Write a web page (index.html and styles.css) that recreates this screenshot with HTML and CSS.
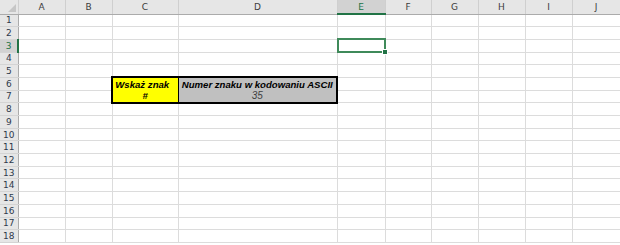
FILE: index.html
```html
<!DOCTYPE html>
<html lang="pl">
<head>
    <meta charset="UTF-8">
    <title>Arkusz - kod ASCII</title>
    <link rel="stylesheet" href="styles.css">
</head>
<body>

    <table class="sheet">
        <colgroup>
            <col class="c-head">
            <col class="c-a"><col class="c-b"><col class="c-c"><col class="c-d"><col class="c-e">
            <col class="c-f"><col class="c-g"><col class="c-h"><col class="c-i"><col class="c-j">
        </colgroup>
        <thead>
            <tr class="col-heads">
                <th class="corner"><span class="corner-mark"></span></th>
                <th>A</th><th>B</th><th>C</th><th>D</th><th class="active">E</th>
                <th>F</th><th>G</th><th>H</th><th>I</th><th>J</th>
            </tr>
        </thead>
        <tbody>
            <tr><th>1</th><td></td><td></td><td></td><td></td><td></td><td></td><td></td><td></td><td></td><td></td></tr>
            <tr><th>2</th><td></td><td></td><td></td><td></td><td></td><td></td><td></td><td></td><td></td><td></td></tr>
            <tr><th class="active">3</th><td></td><td></td><td></td><td></td><td class="selected"></td><td></td><td></td><td></td><td></td><td></td></tr>
            <tr><th>4</th><td></td><td></td><td></td><td></td><td></td><td></td><td></td><td></td><td></td><td></td></tr>
            <tr><th>5</th><td></td><td></td><td></td><td></td><td></td><td></td><td></td><td></td><td></td><td></td></tr>
            <tr>
                <th>6</th><td></td><td></td>
                <td class="box box-left box-top yellow label"><span class="shift">Wskaż znak</span></td>
                <td class="box box-right box-top grey label">Numer znaku w kodowaniu ASCII</td>
                <td></td><td></td><td></td><td></td><td></td><td></td>
            </tr>
            <tr>
                <th>7</th><td></td><td></td>
                <td class="box box-left box-bottom yellow label">#</td>
                <td class="box box-right box-bottom grey value">35</td>
                <td></td><td></td><td></td><td></td><td></td><td></td>
            </tr>
            <tr><th>8</th><td></td><td></td><td></td><td></td><td></td><td></td><td></td><td></td><td></td><td></td></tr>
            <tr><th>9</th><td></td><td></td><td></td><td></td><td></td><td></td><td></td><td></td><td></td><td></td></tr>
            <tr><th>10</th><td></td><td></td><td></td><td></td><td></td><td></td><td></td><td></td><td></td><td></td></tr>
            <tr><th>11</th><td></td><td></td><td></td><td></td><td></td><td></td><td></td><td></td><td></td><td></td></tr>
            <tr><th>12</th><td></td><td></td><td></td><td></td><td></td><td></td><td></td><td></td><td></td><td></td></tr>
            <tr><th>13</th><td></td><td></td><td></td><td></td><td></td><td></td><td></td><td></td><td></td><td></td></tr>
            <tr><th>14</th><td></td><td></td><td></td><td></td><td></td><td></td><td></td><td></td><td></td><td></td></tr>
            <tr><th>15</th><td></td><td></td><td></td><td></td><td></td><td></td><td></td><td></td><td></td><td></td></tr>
            <tr><th>16</th><td></td><td></td><td></td><td></td><td></td><td></td><td></td><td></td><td></td><td></td></tr>
            <tr><th>17</th><td></td><td></td><td></td><td></td><td></td><td></td><td></td><td></td><td></td><td></td></tr>
            <tr><th>18</th><td></td><td></td><td></td><td></td><td></td><td></td><td></td><td></td><td></td><td></td></tr>
        </tbody>
    </table>

</body>
</html>
```

FILE: styles.css
```css
/* Strona */
body {
    margin: 0;
    padding: 0;
    background: #fff;
    font-family: "Liberation Sans", Arial, sans-serif;
    overflow: hidden;
}

/* Siatka arkusza */
.sheet {
    border-collapse: collapse;
    table-layout: fixed;
    width: 620px;
}

.c-head { width: 18px; }
.c-a { width: 47px; }
.c-b { width: 47px; }
.c-c { width: 66px; }
.c-d { width: 159px; }
.c-e { width: 48px; }
.c-f { width: 46px; }
.c-g { width: 47px; }
.c-h { width: 47px; }
.c-i { width: 47px; }
.c-j { width: 48px; }

tbody tr {
    height: 12.7px;
}

td {
    padding: 0;
    border-right: 1px solid #dcdcdc;
    border-bottom: 1px solid #dcdcdc;
    font-size: 9.6px;
    line-height: 11px;
    text-align: center;
    white-space: nowrap;
    overflow: visible;
}

/* Naglowki kolumn i wierszy */
th {
    padding: 0;
    background: #e6e6e6;
    color: #2f3a4c;
    font-family: "DejaVu Sans", sans-serif;
    font-weight: normal;
    font-size: 9px;
    line-height: 10px;
    text-align: center;
}

.col-heads {
    height: 14px;
}

.col-heads th {
    border-right: 1px solid #cfcfcf;
    border-bottom: 1px solid #ababab;
    font-size: 9px;
    color: #3c3c3c;
}

tbody th {
    border-right: 1px solid #ababab;
    border-bottom: 1px solid #d4d4d4;
}

.col-heads th.active {
    background: #d2d2d2;
    color: #217346;
    border-bottom: 2px solid #217346;
}

tbody th.active {
    background: #d2d2d2;
    color: #217346;
    border-right: 2px solid #217346;
}

/* Przycisk "zaznacz wszystko" */
.corner {
    position: relative;
}

.corner-mark {
    position: absolute;
    right: 2px;
    bottom: 2px;
    width: 0;
    height: 0;
    border-left: 8px solid transparent;
    border-bottom: 8px solid #c6c6c6;
}

/* Zaznaczona komorka E3 */
.selected {
    position: relative;
}

.selected::before {
    content: '';
    position: absolute;
    top: -2px;
    left: -1px;
    right: -1px;
    bottom: -1px;
    border: 2px solid #3f8a5a;
}

.selected::after {
    content: '';
    position: absolute;
    right: -3px;
    bottom: -3px;
    width: 4px;
    height: 4px;
    background: #217346;
    border: 1px solid #fff;
}

/* Tabelka z kodem ASCII */
.yellow {
    background: #ffff00;
}

.grey {
    background: #c0c0c0;
}

.label {
    font-weight: bold;
    font-style: italic;
    color: #000;
}

.value {
    font-style: italic;
    font-size: 10px;
    color: #404040;
}

.box-left { border-left: 2px solid #000; }
.box-right { border-right: 2px solid #000; }
.box-top { border-top: 2px solid #000; }
.box-bottom { border-bottom: 2px solid #000; }

tr td.box-top { border-bottom: hidden; }
td.yellow { border-right: 1px solid #000; }

.shift {
    margin-right: 6px;
}
```
